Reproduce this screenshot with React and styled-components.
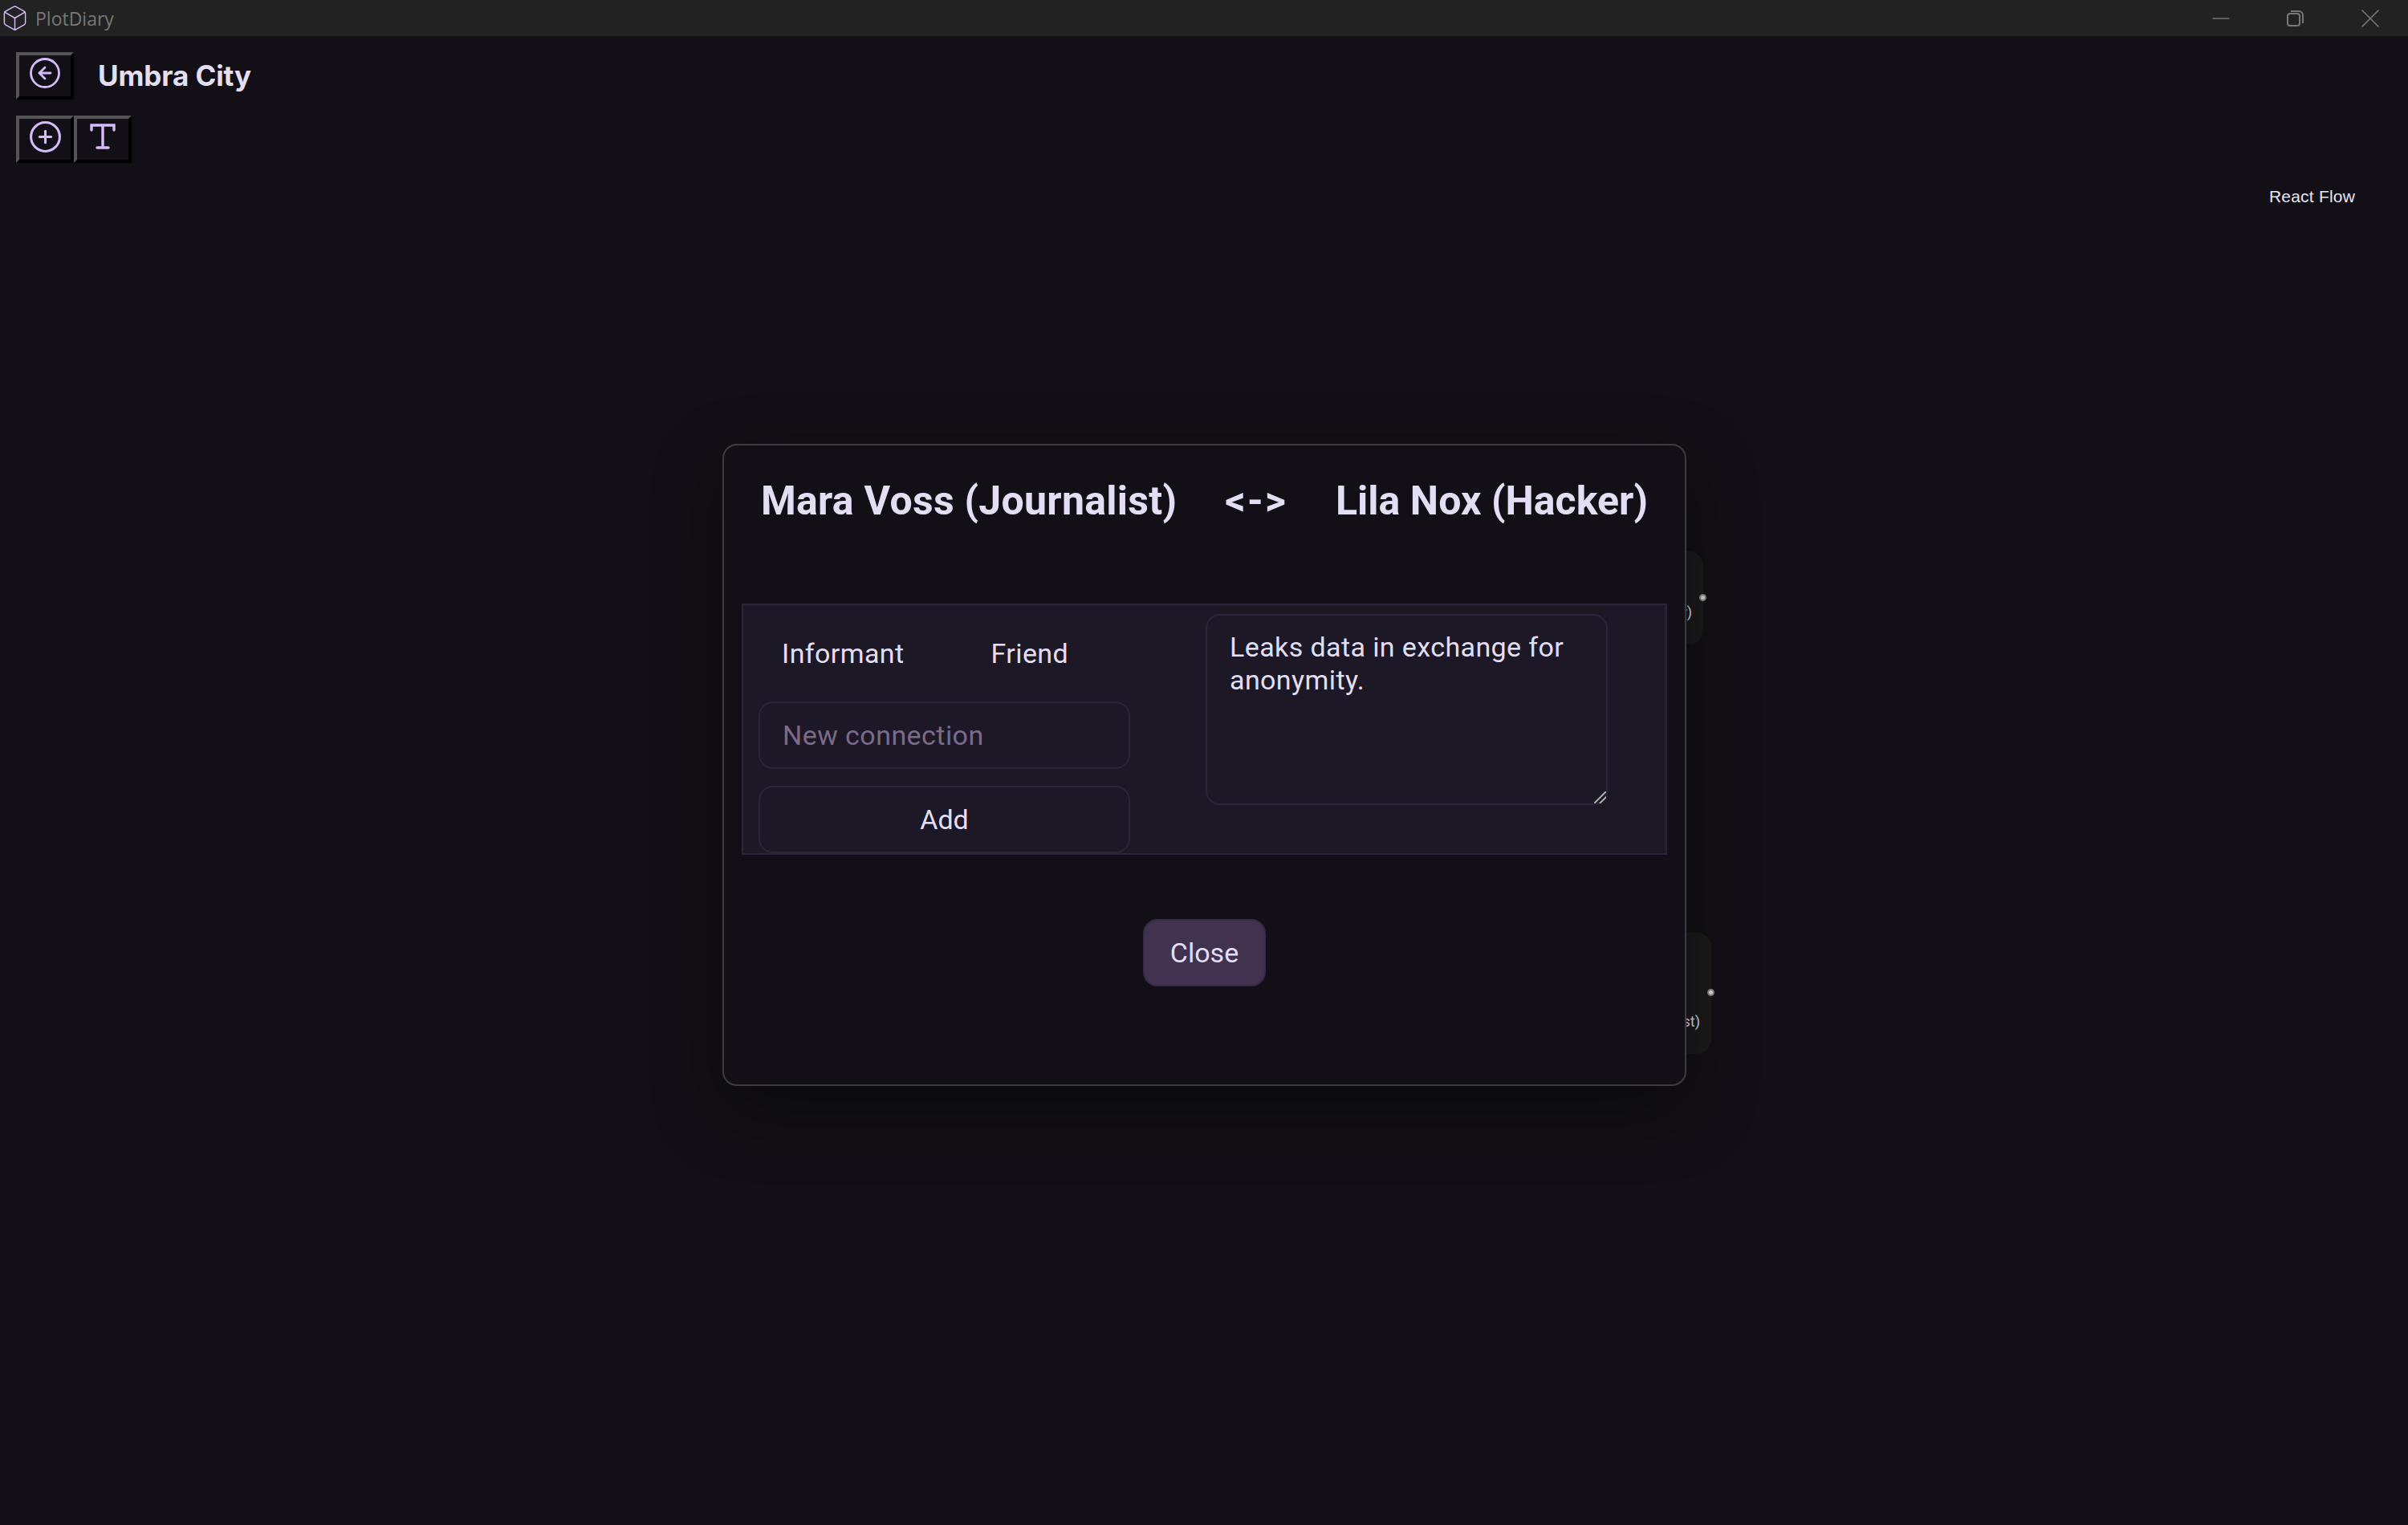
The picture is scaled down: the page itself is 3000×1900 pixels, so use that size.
import React from 'react'
import styled, { createGlobalStyle } from 'styled-components'
import { Box, CircleArrowLeft, CirclePlus, Minus, X } from 'lucide-react'

const GlobalStyle = createGlobalStyle`
  html, body, #root {
    margin: 0;
    height: 100%;
  }
  body {
    background: #121016;
    color: #e2dff5;
    font-family: "Roboto", "Liberation Sans", sans-serif;
  }
`

const Page = styled.div`
  position: relative;
  width: 3000px;
  height: 1900px;
  overflow: hidden;
  background: #121016;
`

const TitleBar = styled.header`
  display: flex;
  align-items: center;
  height: 45px;
  padding-left: 1px;
  background: #222222;
  color: #777777;
  font-family: "Open Sans", sans-serif;
  font-size: 23px;
`

const AppName = styled.span`
  margin-left: 8px;
`

const WindowControls = styled.div`
  display: flex;
  margin-left: auto;
  margin-right: 1px;
`

const WindowButton = styled.div`
  display: flex;
  align-items: center;
  justify-content: center;
  width: 93px;
  height: 42px;
  color: #777777;
`

const Toolbar = styled.div`
  display: flex;
  align-items: center;
  padding-left: 20px;
  margin-top: ${p => p.$top}px;
`

const ToolButton = styled.button`
  display: flex;
  align-items: center;
  justify-content: center;
  width: 72px;
  height: 59px;
  padding: 0 0 7px;
  box-sizing: border-box;
  background: #121016;
  color: #d4bcfb;
  border: 4px solid;
  border-color: #555555 #000000 #000000 #555555;
`

const BoardTitle = styled.h1`
  margin: 0 0 2px 30px;
  font-family: "Inter", sans-serif;
  font-size: 35px;
  font-weight: 700;
  letter-spacing: -0.1px;
  color: #e2dff5;
`

const Attribution = styled.a`
  position: absolute;
  top: 233px;
  left: 2827px;
  font-family: "Liberation Sans", sans-serif;
  font-size: 21px;
  letter-spacing: 0.2px;
  color: #e8e6f8;
`

const FlowNode = styled.div`
  position: absolute;
  top: ${p => p.$top}px;
  left: ${p => p.$right - 500}px;
  display: flex;
  align-items: flex-end;
  justify-content: flex-end;
  box-sizing: border-box;
  width: 500px;
  height: ${p => p.$height}px;
  padding: 0 ${p => p.$inset}px ${p => p.$bottom}px 0;
  border-radius: 18px;
  background: #1b1b1b;
  font-size: 18px;
  color: #ddd9ee;
`

const Handle = styled.span`
  position: absolute;
  top: ${p => p.$at}px;
  right: -4px;
  width: 5px;
  height: 5px;
  border: 2px solid #8a8a8a;
  border-radius: 50%;
  background: #d8d8d8;
`

const Overlay = styled.div`
  position: absolute;
  inset: 0;
  display: flex;
  align-items: center;
  justify-content: center;
  padding-top: 6px;
`

const Modal = styled.section`
  display: flex;
  flex-direction: column;
  box-sizing: border-box;
  width: 1201px;
  height: 800px;
  margin-left: 1px;
  padding: 0 22px;
  border: 2px solid #3c3c40;
  border-radius: 18px;
  background: #121016;
  box-shadow: 0 30px 85px rgba(0, 0, 0, 0.42);
`

const ModalHeader = styled.div`
  display: flex;
  align-items: center;
  justify-content: center;
  height: 197px;
  padding-bottom: 60px;
  box-sizing: border-box;
  font-size: 50px;
  font-weight: 700;
  color: #e2dff5;
`

const PersonName = styled.span`
  letter-spacing: ${p => p.$spacing}px;
`

const Arrow = styled.span`
  margin: 0 60px;
  letter-spacing: 2.2px;
`

const ConnectionPanel = styled.div`
  display: grid;
  grid-template-columns: 576px 1fr;
  box-sizing: border-box;
  height: 313px;
  border: 2px solid #2a2538;
  background: #1d1826;
`

const LeftColumn = styled.div`
  display: flex;
  flex-direction: column;
  padding-left: 19px;
`

const TagRow = styled.div`
  display: flex;
  gap: 108px;
  height: 120px;
  padding: 40px 0 0 29px;
  box-sizing: border-box;
  font-size: 34px;
  line-height: 40px;
  letter-spacing: 0.4px;
`

const NewInput = styled.input`
  box-sizing: border-box;
  width: 463px;
  height: 84px;
  padding: 0 28px;
  border: 2px solid #2a2538;
  border-radius: 18px;
  outline: none;
  background: #1d1826;
  color: #e2dff5;
  font: 34px "Roboto", sans-serif;
  letter-spacing: 0.45px;
  &::placeholder {
    color: #7a6a8c;
    opacity: 1;
  }
`

const AddButton = styled.button`
  box-sizing: border-box;
  width: 463px;
  height: 84px;
  margin-top: 21px;
  border: 2px solid #2a2538;
  border-radius: 18px;
  background: #1d1826;
  color: #e2dff5;
  font: 34px "Roboto", sans-serif;
`

const Notes = styled.textarea`
  box-sizing: border-box;
  width: 501px;
  height: 238px;
  margin-top: 11px;
  padding: 19px 28px;
  border: 2px solid #2a2538;
  border-radius: 18px;
  outline: none;
  background: #1d1826;
  color: #e2dff5;
  font: 34px/41px "Roboto", sans-serif;
  letter-spacing: 0.4px;
  &::-webkit-resizer {
    background: linear-gradient(
      135deg,
      transparent 44%,
      #a0a0a0 44% 56%,
      transparent 56% 67%,
      #a0a0a0 67% 79%,
      transparent 79%
    );
  }
`

const ModalFooter = styled.div`
  display: flex;
  justify-content: center;
  margin-top: 80px;
`

const CloseButton = styled.button`
  box-sizing: border-box;
  width: 153px;
  height: 84px;
  border: 2px solid #352b45;
  border-radius: 18px;
  background: #41324f;
  color: #e2dff5;
  font: 34px "Roboto", sans-serif;
`

function RestoreIcon() {
  return (
    <svg width="22" height="22" viewBox="0 0 22 22" fill="none" stroke="currentColor" strokeWidth="2">
      <rect x="1" y="5" width="15" height="15" rx="3" />
      <path d="M5 2h10a5 5 0 0 1 5 5v10" />
    </svg>
  )
}

function SerifT() {
  return (
    <svg width="34" height="34" viewBox="0 0 34 34" fill="none" stroke="currentColor" strokeWidth="3.4" strokeLinecap="round">
      <path d="M3 9V3h28v6M17 3v28M10 31h14" />
    </svg>
  )
}

export default function App() {
  return (
    <Page>
      <GlobalStyle />
      <TitleBar>
        <Box size={35} color="#d4bcfb" strokeWidth={1} />
        <AppName>PlotDiary</AppName>
        <WindowControls>
          <WindowButton><Minus size={34} strokeWidth={1} /></WindowButton>
          <WindowButton><RestoreIcon /></WindowButton>
          <WindowButton><X size={40} strokeWidth={1} /></WindowButton>
        </WindowControls>
      </TitleBar>

      <Toolbar $top={20}>
        <ToolButton><CircleArrowLeft size={42} strokeWidth={1.6} /></ToolButton>
        <BoardTitle>Umbra City</BoardTitle>
      </Toolbar>
      <Toolbar $top={20}>
        <ToolButton><CirclePlus size={43} strokeWidth={1.7} /></ToolButton>
        <ToolButton><SerifT /></ToolButton>
      </Toolbar>

      <Attribution>React Flow</Attribution>

      <FlowNode $top={687} $right={2122} $height={116} $inset={14} $bottom={30}>
        Lila Nox (Hacker)
        <Handle $at={53} />
      </FlowNode>
      <FlowNode $top={1162} $right={2132} $height={151} $inset={14} $bottom={30}>
        Mara Voss (Journalist)
        <Handle $at={70} />
      </FlowNode>

      <Overlay>
        <Modal>
          <ModalHeader>
            <PersonName $spacing={0.28}>Mara Voss (Journalist)</PersonName>
            <Arrow>&lt;-&gt;</Arrow>
            <PersonName $spacing={0.05}>Lila Nox (Hacker)</PersonName>
          </ModalHeader>
          <ConnectionPanel>
            <LeftColumn>
              <TagRow>
                <span>Informant</span>
                <span>Friend</span>
              </TagRow>
              <NewInput placeholder="New connection" />
              <AddButton>Add</AddButton>
            </LeftColumn>
            <Notes defaultValue="Leaks data in exchange for anonymity." />
          </ConnectionPanel>
          <ModalFooter>
            <CloseButton>Close</CloseButton>
          </ModalFooter>
        </Modal>
      </Overlay>
    </Page>
  )
}
